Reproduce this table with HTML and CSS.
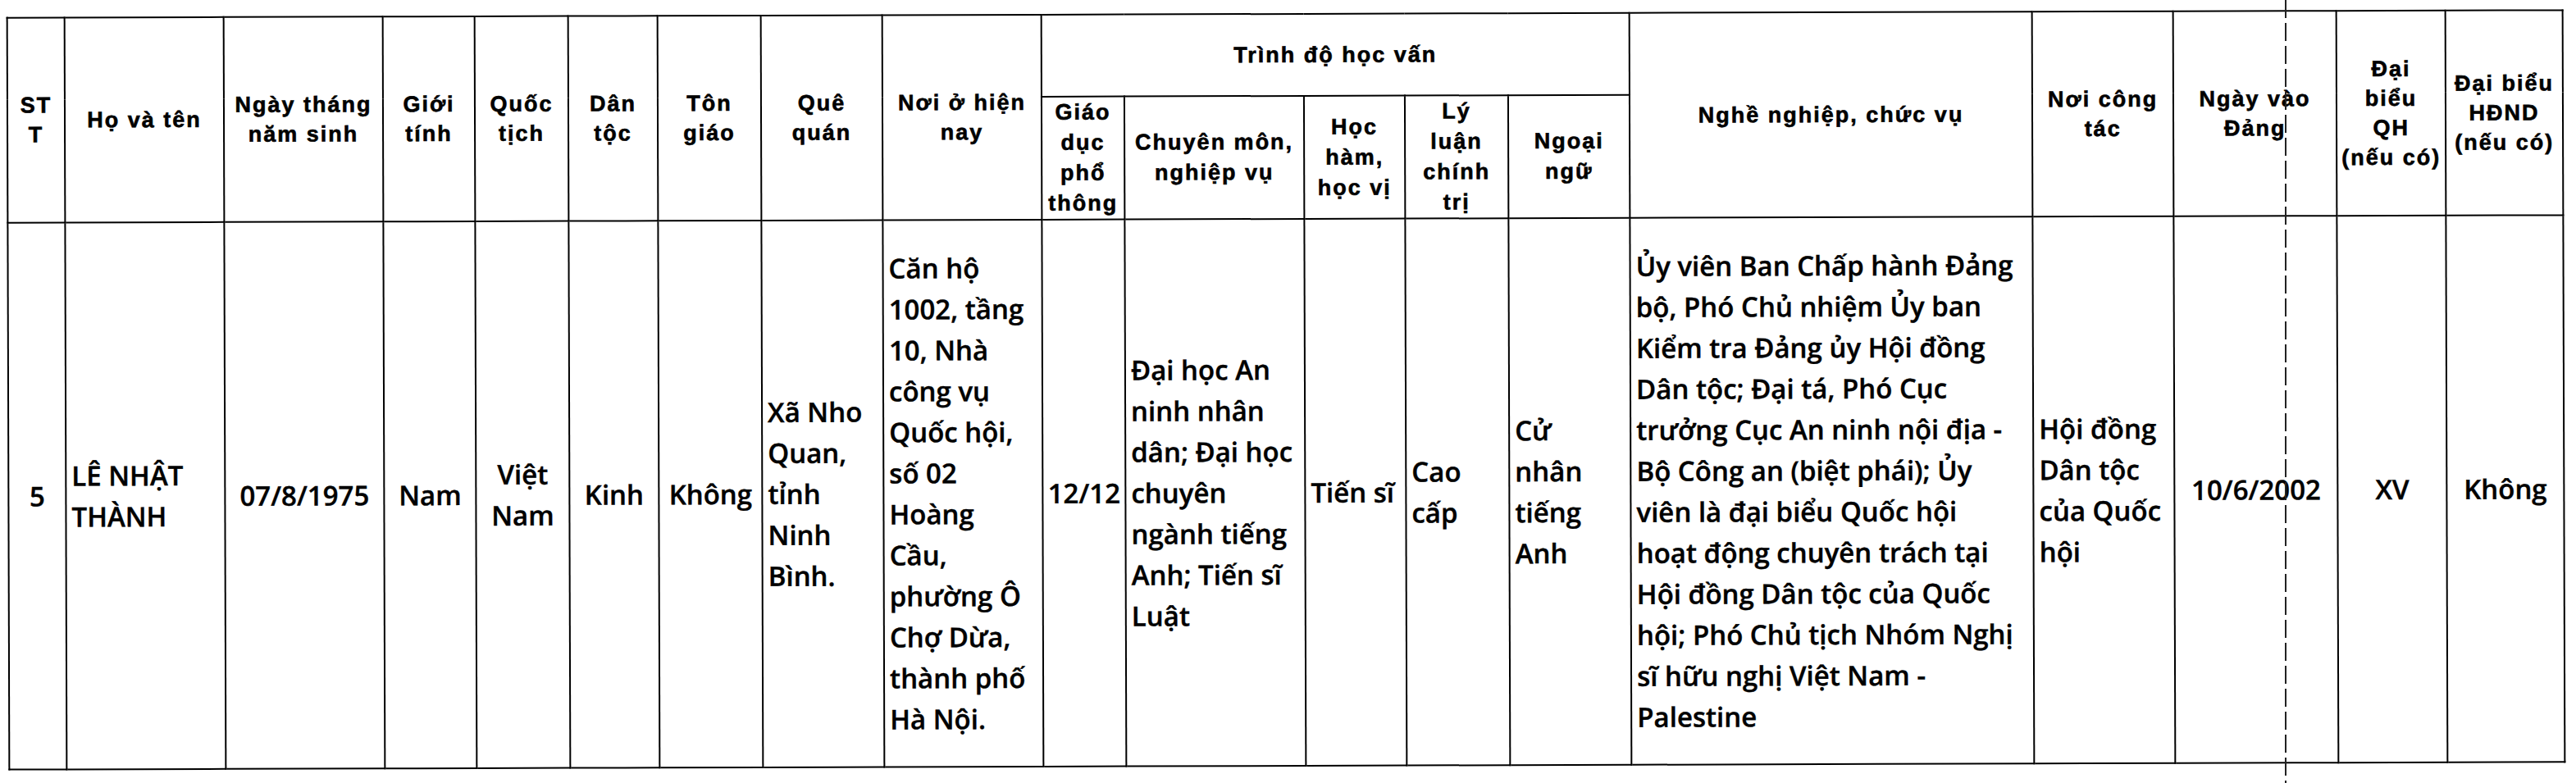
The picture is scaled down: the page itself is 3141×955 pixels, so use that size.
FILE: index.html
```html
<!DOCTYPE html>
<html lang="vi">
<head>
<meta charset="utf-8">
<title>Danh sách</title>
<link rel="stylesheet" href="styles.css">
</head>
<body>
<div class="page">
  <table class="roster">
    <colgroup>
      <col><col><col><col><col><col><col><col><col><col>
      <col><col><col><col><col><col><col><col><col>
    </colgroup>
    <thead>
      <tr class="h1">
        <th rowspan="2">ST<br>T</th>
        <th rowspan="2">Họ và tên</th>
        <th rowspan="2">Ngày tháng<br>năm sinh</th>
        <th rowspan="2">Giới<br>tính</th>
        <th rowspan="2">Quốc<br>tịch</th>
        <th rowspan="2">Dân<br>tộc</th>
        <th rowspan="2">Tôn<br>giáo</th>
        <th rowspan="2">Quê<br>quán</th>
        <th rowspan="2">Nơi ở hiện<br>nay</th>
        <th colspan="5">Trình độ học vấn</th>
        <th rowspan="2">Nghề nghiệp, chức vụ</th>
        <th rowspan="2">Nơi công<br>tác</th>
        <th rowspan="2">Ngày vào<br>Đảng</th>
        <th rowspan="2" class="hq">Đại<br>biểu<br>QH<br>(nếu có)</th>
        <th rowspan="2" class="hq">Đại biểu<br>HĐND<br>(nếu có)</th>
      </tr>
      <tr class="h2">
        <th>Giáo<br>dục<br>phổ<br>thông</th>
        <th>Chuyên môn,<br>nghiệp vụ</th>
        <th>Học<br>hàm,<br>học vị</th>
        <th>Lý<br>luận<br>chính<br>trị</th>
        <th>Ngoại<br>ngữ</th>
      </tr>
    </thead>
    <tbody>
      <tr class="row">
        <td class="c">5</td>
        <td>LÊ NHẬT<br>THÀNH</td>
        <td class="c">07/8/1975</td>
        <td class="c">Nam</td>
        <td class="c">Việt<br>Nam</td>
        <td class="c">Kinh</td>
        <td class="c">Không</td>
        <td>Xã Nho<br>Quan,<br>tỉnh<br>Ninh<br>Bình.</td>
        <td>Căn hộ<br>1002, tầng<br>10, Nhà<br>công vụ<br>Quốc hội,<br>số 02<br>Hoàng<br>Cầu,<br>phường Ô<br>Chợ Dừa,<br>thành phố<br>Hà Nội.</td>
        <td class="c tight">12/12</td>
        <td>Đại học An<br>ninh nhân<br>dân; Đại học<br>chuyên<br>ngành tiếng<br>Anh; Tiến sĩ<br>Luật</td>
        <td>Tiến sĩ</td>
        <td>Cao<br>cấp</td>
        <td>Cử<br>nhân<br>tiếng<br>Anh</td>
        <td>Ủy viên Ban Chấp hành Đảng<br>bộ, Phó Chủ nhiệm Ủy ban<br>Kiểm tra Đảng ủy Hội đồng<br>Dân tộc; Đại tá, Phó Cục<br>trưởng Cục An ninh nội địa -<br>Bộ Công an (biệt phái); Ủy<br>viên là đại biểu Quốc hội<br>hoạt động chuyên trách tại<br>Hội đồng Dân tộc của Quốc<br>hội; Phó Chủ tịch Nhóm Nghị<br>sĩ hữu nghị Việt Nam -<br>Palestine</td>
        <td>Hội đồng<br>Dân tộc<br>của Quốc<br>hội</td>
        <td class="c">10/6/2002</td>
        <td class="c">XV</td>
        <td class="c">Không</td>
      </tr>
    </tbody>
  </table>
</div>
<div class="scanline"></div>
</body>
</html>
```

FILE: styles.css
```css
html, body {
  margin: 0;
  padding: 0;
  background: #fff;
  width: 3141px;
  height: 955px;
  overflow: hidden;
}

.page {
  padding: 16px 0 0 9px;
}

.roster {
  border-collapse: collapse;
  table-layout: fixed;
  width: 3116px;
  transform: rotate(-0.17deg);
  transform-origin: center center;
  color: #000;
}

.roster col:nth-child(1)  { width: 70px; }
.roster col:nth-child(2)  { width: 194px; }
.roster col:nth-child(3)  { width: 194px; }
.roster col:nth-child(4)  { width: 112px; }
.roster col:nth-child(5)  { width: 114px; }
.roster col:nth-child(6)  { width: 109px; }
.roster col:nth-child(7)  { width: 126px; }
.roster col:nth-child(8)  { width: 148px; }
.roster col:nth-child(9)  { width: 194px; }
.roster col:nth-child(10) { width: 101px; }
.roster col:nth-child(11) { width: 219px; }
.roster col:nth-child(12) { width: 123px; }
.roster col:nth-child(13) { width: 126px; }
.roster col:nth-child(14) { width: 148px; }
.roster col:nth-child(15) { width: 491px; }
.roster col:nth-child(16) { width: 172px; }
.roster col:nth-child(17) { width: 199px; }
.roster col:nth-child(18) { width: 133px; }
.roster col:nth-child(19) { width: 143px; }

.roster th,
.roster td {
  border: 2px solid #000;
  vertical-align: middle;
  overflow: visible;
}

.roster th {
  font-family: "Liberation Sans", Arial, sans-serif;
  font-weight: 700;
  font-size: 27px;
  letter-spacing: 2px;
  line-height: 36px;
  text-align: center;
  padding: 0 1px;
  white-space: nowrap;
  -webkit-text-stroke: 0.6px #000;
}

.roster .h1 { height: 100px; }
.roster .h2 { height: 148px; }
.roster .h2 th { line-height: 37px; }

.roster td {
  font-family: "Open Sans", "Noto Sans", sans-serif;
  font-weight: 600;
  font-size: 33px;
  line-height: 50px;
  padding: 0 6px;
  text-align: left;
  white-space: nowrap;
  -webkit-text-stroke: 0.4px #000;
}

.roster .row { height: 667px; }

.roster td.c { text-align: center; }
.roster td.tight { padding: 0 2px; }

.scanline {
  position: absolute;
  left: 2786px;
  top: 0;
  width: 2px;
  height: 955px;
  background: repeating-linear-gradient(to bottom, #222 0 22px, transparent 22px 28px);
}
```
